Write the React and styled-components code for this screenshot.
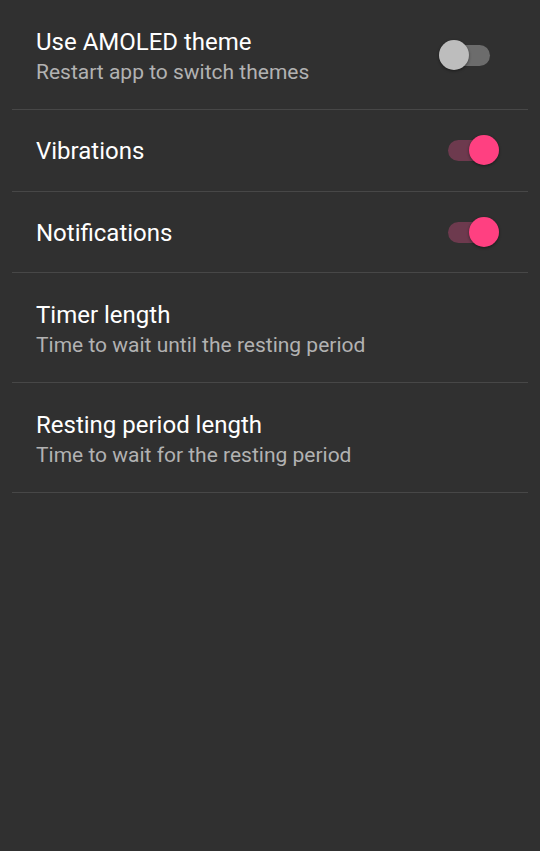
import React from "react";
import styled, { createGlobalStyle } from "styled-components";

const Global = createGlobalStyle`
  html, body {
    margin: 0;
    padding: 0;
    background: #303030;
  }
  body {
    font-family: Roboto, "Noto Sans", sans-serif;
    -webkit-font-smoothing: antialiased;
  }
`;

const Page = styled.div`
  min-height: 851px;
  background: #303030;
  padding: 0 12px;
  box-sizing: border-box;
`;

const List = styled.div`
  display: flex;
  flex-direction: column;
`;

const Row = styled.div`
  display: flex;
  align-items: center;
  justify-content: space-between;
  padding-left: 24px;
  border-bottom: 1px solid #474747;
`;

const Texts = styled.div`
  display: flex;
  flex-direction: column;
  padding: ${(p) => (p.$twoLine ? "27px 0 22px" : "26px 0 24.5px")};
`;

const Title = styled.div`
  font-size: 24px;
  line-height: 30px;
  color: #ffffff;
`;

const Subtitle = styled.div`
  font-size: 21px;
  line-height: 30px;
  color: #b2b2b2;
`;

const SwitchWrap = styled.div`
  position: relative;
  width: 51px;
  height: 30px;
  margin-right: ${(p) => p.$mr}px;
  flex-shrink: 0;
`;

const Track = styled.div`
  position: absolute;
  left: 0;
  right: 0;
  top: 5px;
  height: 21px;
  border-radius: 11px;
  background: ${(p) => (p.$on ? "#6d3a4e" : "#6c6c6c")};
`;

const Thumb = styled.div`
  position: absolute;
  top: 0;
  left: ${(p) => (p.$on ? "21px" : "0px")};
  width: 30px;
  height: 30px;
  border-radius: 50%;
  background: ${(p) => (p.$on ? "#ff4081" : "#bdbdbd")};
  box-shadow: 0 1px 3px rgba(0, 0, 0, 0.45);
`;

const Switch = ({ on, mr }) => (
  <SwitchWrap $mr={mr}>
    <Track $on={on} />
    <Thumb $on={on} />
  </SwitchWrap>
);

const items = [
  { title: "Use AMOLED theme", sub: "Restart app to switch themes", sw: false, mr: 38 },
  { title: "Vibrations", sw: true, mr: 29 },
  { title: "Notifications", sw: true, mr: 29 },
  { title: "Timer length", sub: "Time to wait until the resting period" },
  { title: "Resting period length", sub: "Time to wait for the resting period" },
];

export default function App() {
  return (
    <>
      <Global />
      <Page>
        <List>
          {items.map((it) => (
            <Row key={it.title}>
              <Texts $twoLine={!!it.sub}>
                <Title>{it.title}</Title>
                {it.sub && <Subtitle>{it.sub}</Subtitle>}
              </Texts>
              {it.sw !== undefined && <Switch on={it.sw} mr={it.mr} />}
            </Row>
          ))}
        </List>
      </Page>
    </>
  );
}
